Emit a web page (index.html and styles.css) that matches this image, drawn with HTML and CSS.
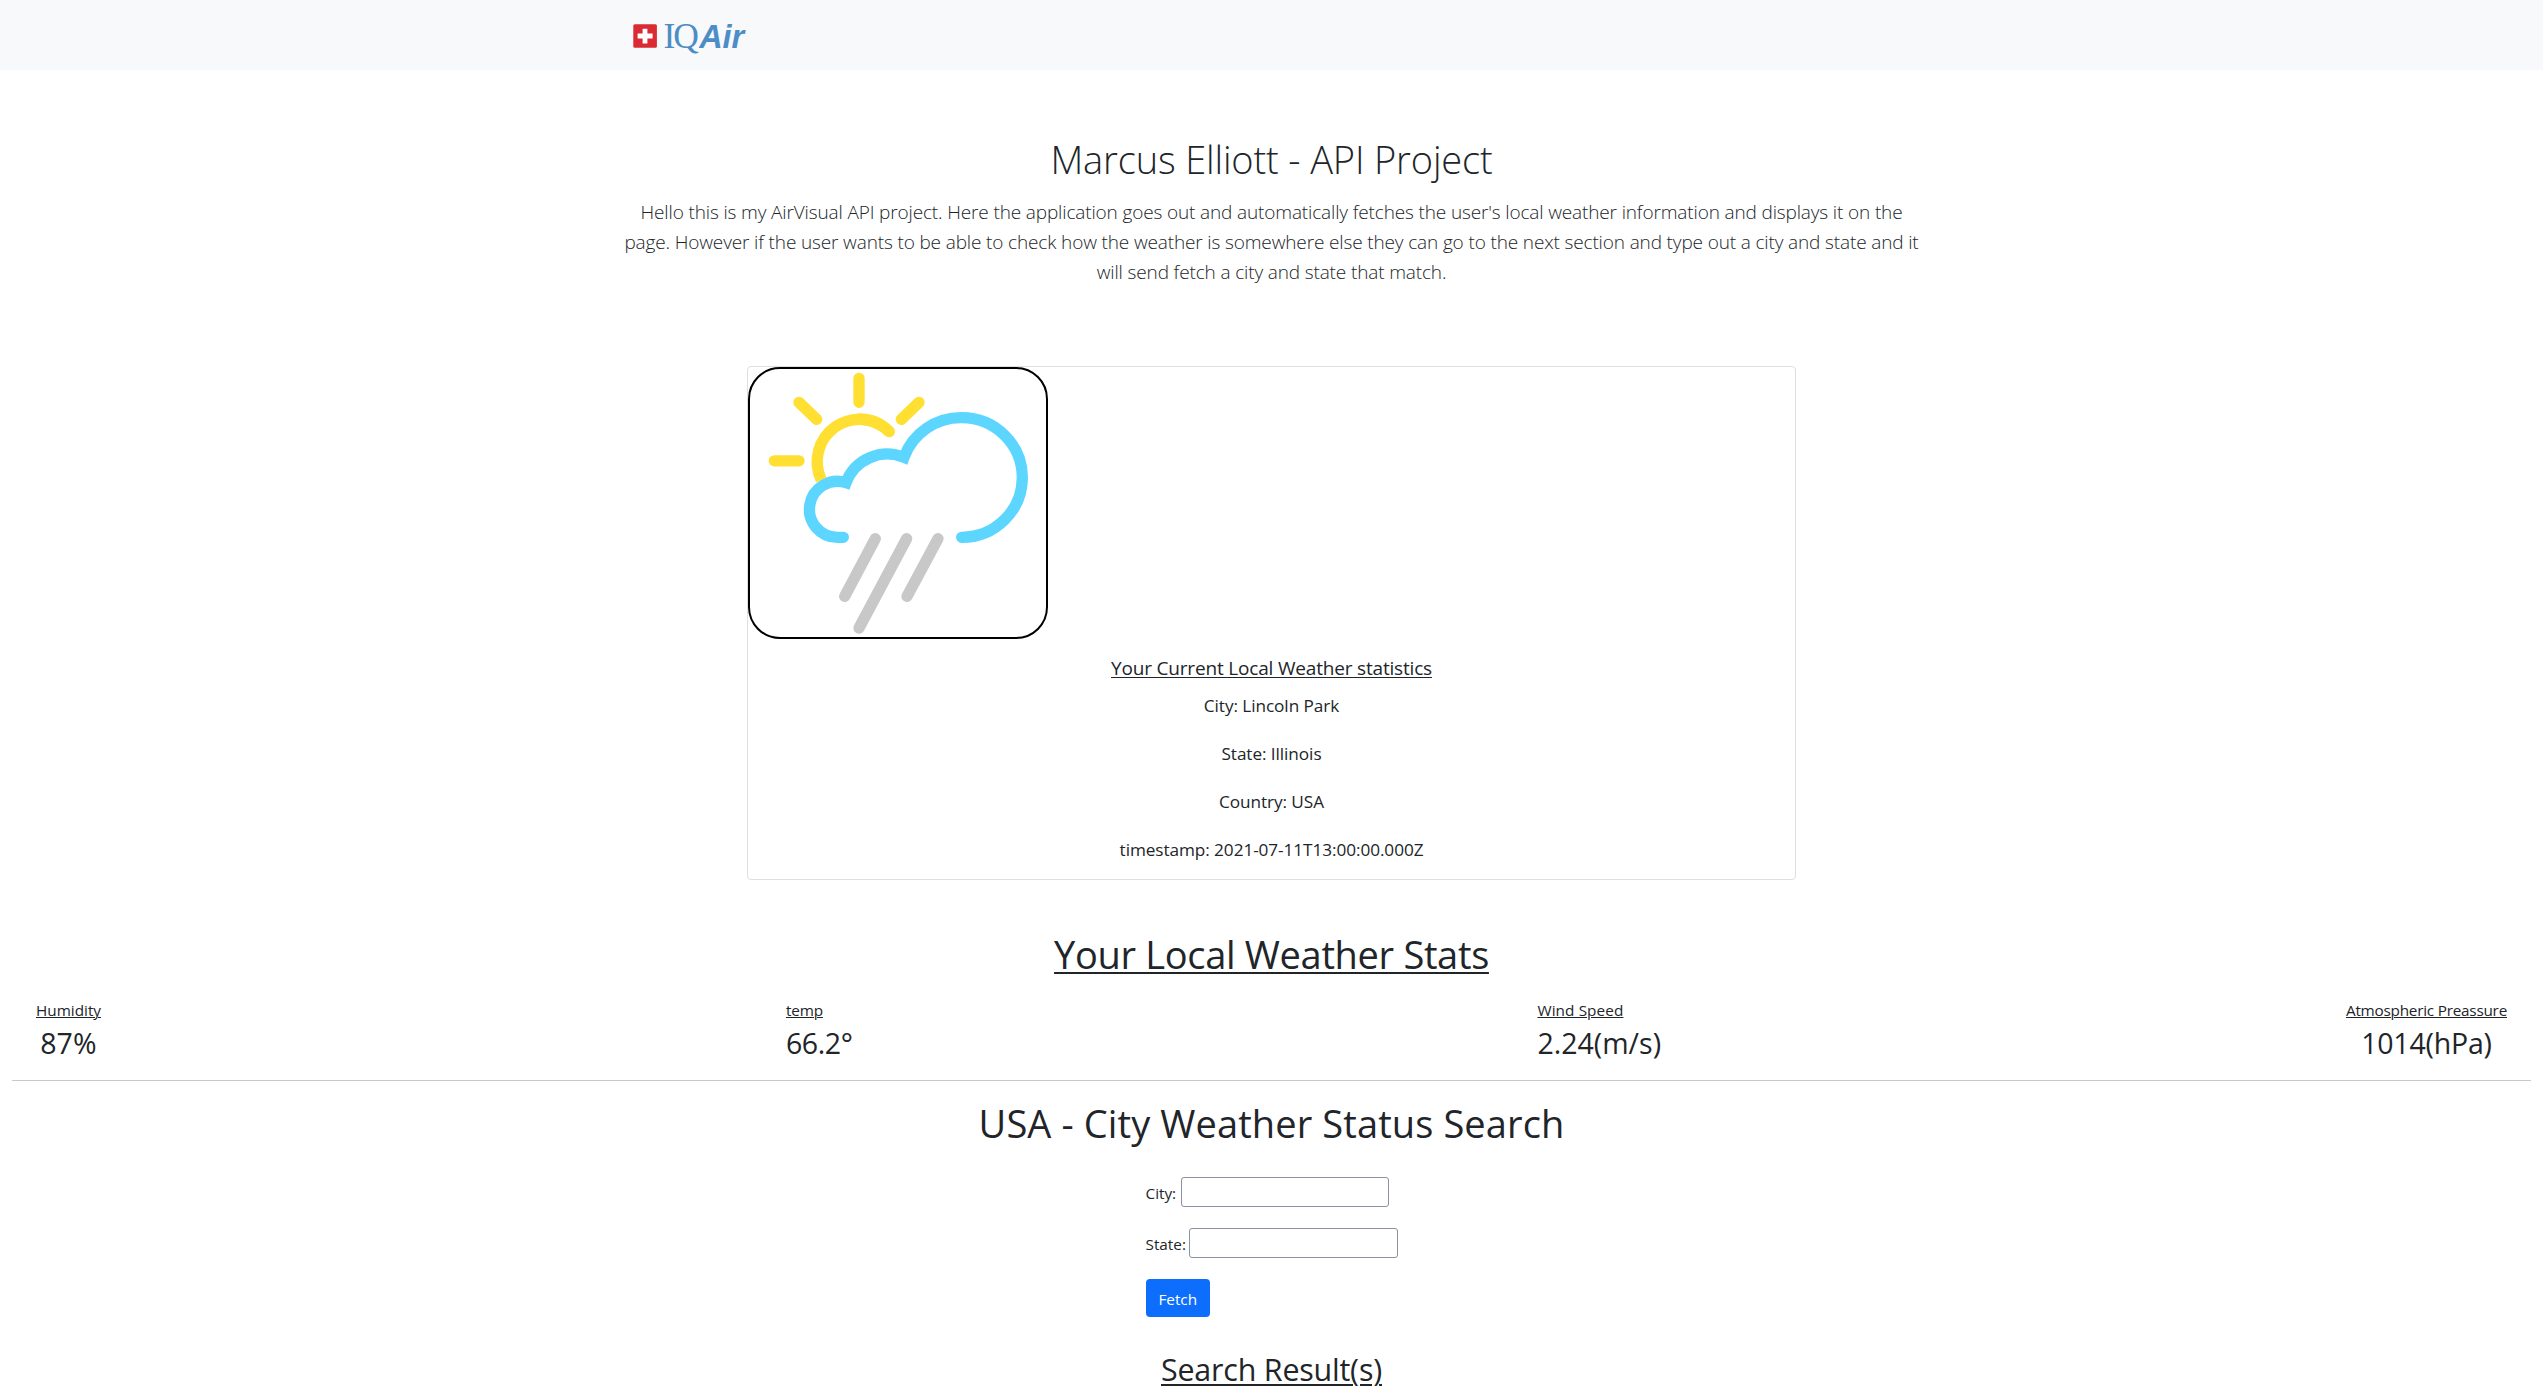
FILE: index.html
```html
<!DOCTYPE html>
<html lang="en">
<head>
<meta charset="utf-8">
<title>Marcus Elliott - API Project</title>
<link rel="stylesheet" href="styles.css">
</head>
<body>
<nav class="navbar">
  <svg class="logo" width="120" height="40" viewBox="0 0 120 40" role="img" aria-label="IQAir">
    <rect x="0.3" y="0.2" width="23.6" height="23.6" rx="1.6" fill="#da2a33"/>
    <path d="M9.6 4.8h4.8v4.6h5.2v5.2h-5.2v5h-4.8v-5H4.6V9.400h5z" fill="#fff"/>
    <g fill="#4c8dc6">
      <text class="logo-serif" x="30.600" y="23.800" textLength="11">I</text>
      <text class="logo-serif" x="40.300" y="23.800">Q</text>
      <text class="logo-sans" x="66.200" y="23.800" textLength="45" lengthAdjust="spacingAndGlyphs">Air</text>
    </g>
  </svg>
</nav>

<header class="hero">
  <h1 class="hero-title">Marcus Elliott - API Project</h1>
  <p class="hero-text">Hello this is my AirVisual API project. Here the application goes out and automatically fetches the user's local weather information and displays it on the<br>page. However if the user wants to be able to check how the weather is somewhere else they can go to the next section and type out a city and state and it<br>will send fetch a city and state that match.</p>
</header>

<section class="card">
  <svg class="weather-icon" viewBox="60 57 888 804" fill="none" stroke-width="34" stroke-linecap="round">
    <g stroke="#ffdf32">
      <path d="M387 85v72M207 157l53 51M567 157l-53 51M133 332.500h74"/>
      <path d="M478 245A127 127 0 0 0 274 390" stroke-linecap="butt"/>
      <path d="M478 245A127 127 0 0 0 387 207"/>
    </g>
    <path d="M340 562h-18a84 84 0 1 1 26 -164A132 132 0 0 1 522 322A182 180 0 0 1 695 203A182 180 0 0 1 877 383A182 180 0 0 1 695 562" stroke="#5cd6ff" stroke-miterlimit="8"/>
    <path d="M436 566L344 739M530 566L387 834M624 566L531 739" stroke="#c8c8c8"/>
  </svg>
  <h5 class="card-title">Your Current Local Weather statistics</h5>
  <div class="card-lines">
    <p>City: Lincoln Park</p>
    <p>State: Illinois</p>
    <p>Country: USA</p>
    <p>timestamp: 2021-07-11T13:00:00.000Z</p>
  </div>
</section>

<h1 class="stats-title">Your Local Weather Stats</h1>
<section class="stats">
  <div class="stat stat-center"><span class="label">Humidity</span><span class="value humidity">87%</span></div>
  <div class="stat"><span class="label temp-label">temp</span><span class="value temp">66.2°</span></div>
  <div class="stat"><span class="label wind-label">Wind Speed</span><span class="value wind">2.24(m/s)</span></div>
  <div class="stat stat-center"><span class="label pressure-label">Atmospheric Preassure</span><span class="value">1014(hPa)</span></div>
</section>
<hr class="rule">

<h1 class="search-title">USA - City Weather Status Search</h1>
<form class="search">
  <div class="field"><label for="city">City:</label><input id="city" type="text"></div>
  <div class="field"><label for="state">State:</label><input id="state" type="text"></div>
  <button class="btn" type="button">Fetch</button>
</form>
<h2 class="results-title">Search Result(s)</h2>
</body>
</html>
```
FILE: styles.css
```css
* { box-sizing: border-box; }
html { overflow: hidden; }
body {
  margin: 0;
  background: #fff;
  color: #212529;
  font-family: "Open Sans", "Noto Sans", sans-serif;
  font-size: 15.3px;
  line-height: 24px;
}
h1, h2, h5, p { margin: 0; font-weight: 400; }
h1 { font-size: 38px; line-height: 48px; text-align: center; }

.navbar { height: 70px; padding: 24px 0 0 633px; background: #f8f9fb; }
.logo { display: block; overflow: visible; }
.logo-serif { font: 35.5px "Liberation Serif", serif; }
.logo-sans { font: italic bold 33px "Liberation Sans", sans-serif; }

.hero { padding-top: 65px; text-align: center; }
.hero-title { font-weight: 300; letter-spacing: -0.15px; }
.hero-text {
  margin-top: 14px;
  font-size: 19px;
  font-weight: 300;
  line-height: 30px;
  letter-spacing: -0.14px;
  white-space: nowrap;
}

.card {
  width: 1049px;
  height: 514px;
  margin: 79px auto 0;
  border: 1px solid #dfdfdf;
  border-radius: 4px;
  text-align: center;
}
.weather-icon {
  display: block;
  width: 300px;
  height: 272px;
  border: 2px solid #000;
  border-radius: 32px;
}
.card-title {
  margin-top: 17px;
  font-size: 19px;
  line-height: 24px;
  letter-spacing: -0.18px;
  text-decoration: underline 1px;
  text-underline-offset: 2px;
}
.card-lines {
  display: flex;
  flex-direction: column;
  gap: 22px;
  margin-top: 12.5px;
  font-size: 17.2px;
  line-height: 26.3px;
  letter-spacing: -0.07px;
}

.stats-title {
  margin-top: 50px;
  letter-spacing: -0.32px;
  text-decoration: underline 2px;
  text-underline-offset: 3px;
}
.stats {
  display: flex;
  justify-content: space-between;
  height: 82px;
  margin-top: 20px;
  padding: 0 36px;
}
.stat { display: flex; flex-direction: column; gap: 3px; align-items: flex-start; }
.stat-center { align-items: center; }
.label { text-decoration: underline 1px; text-underline-offset: 1px; }
.temp-label { letter-spacing: -0.15px; }
.wind-label { letter-spacing: 0.1px; }
.pressure-label { letter-spacing: -0.23px; }
.value { font-size: 28.5px; line-height: 36px; letter-spacing: -0.2px; }
.humidity { letter-spacing: 0.2px; }
.temp { letter-spacing: -0.4px; }
.wind { letter-spacing: 0; }
.rule { height: 1px; margin: 0 12px; border: 0; background: #c8c9ca; }

.search-title { margin-top: 18px; letter-spacing: 0.11px; }
.search { width: 252px; margin: 30px auto 0; }
.field { display: flex; height: 30px; margin-bottom: 21px; }
.field label { padding-top: 4px; }
.field input {
  width: 208.5px;
  margin-left: auto;
  border: 1px solid #8f8f9d;
  border-radius: 3px;
  background: #fff;
}
.field:first-child { width: 243.5px; }
.btn {
  display: block;
  width: 64.5px;
  height: 38px;
  padding: 2px 0 0;
  border: 0;
  border-radius: 4px;
  background: #0d6efd;
  color: #fff;
  font: inherit;
}
.results-title {
  margin-top: 34px;
  font-size: 30.4px;
  line-height: 38px;
  letter-spacing: -0.19px;
  text-align: center;
  text-decoration: underline 2px;
  text-underline-offset: 3px;
}
```
